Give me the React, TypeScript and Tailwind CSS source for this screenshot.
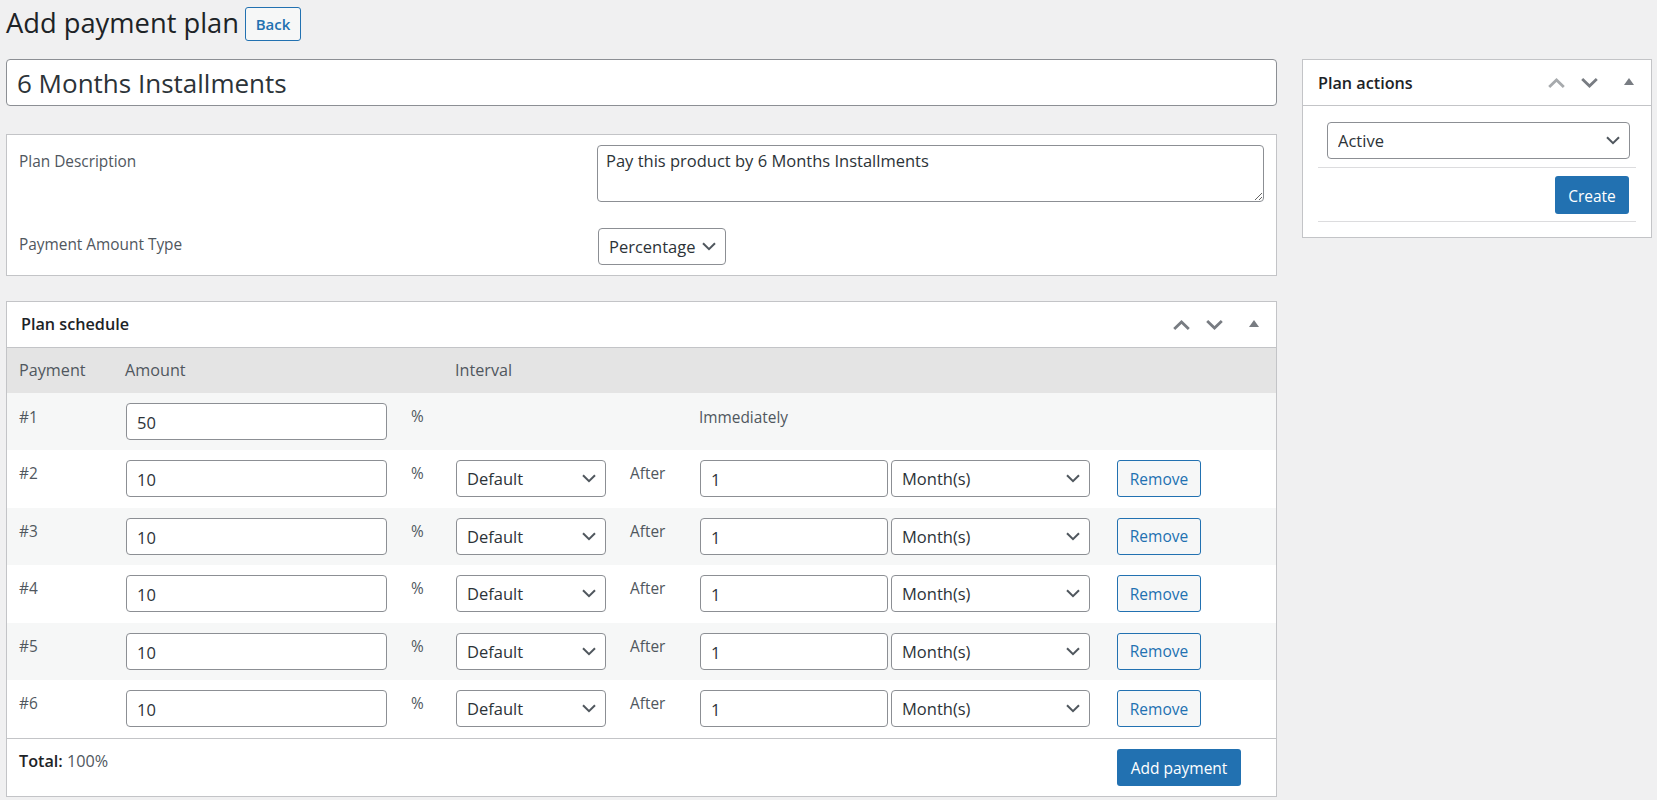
import { ReactNode } from 'react';

const FONT = "font-['Open_Sans',sans-serif]";
const PAYMENTS = [
  { n: 2, alt: false },
  { n: 3, alt: true },
  { n: 4, alt: false },
  { n: 5, alt: true },
  { n: 6, alt: false },
];

function Chevron({ up, className }: { up?: boolean; className?: string }) {
  return (
    <svg width="17" height="10" viewBox="0 0 17 10" fill="none" className={className}>
      <path d={up ? 'M1.2 9 L8.5 2 L15.8 9' : 'M1.2 1 L8.5 8 L15.8 1'} stroke="currentColor" strokeWidth="2.8" />
    </svg>
  );
}

function Triangle() {
  return (
    <svg width="10" height="7" viewBox="0 0 10 7" className="text-[#787c82]">
      <path d="M5 0 L10 7 L0 7 Z" fill="currentColor" />
    </svg>
  );
}

function PanelHandles({ fadedUp }: { fadedUp?: boolean }) {
  return (
    <div className="flex items-center">
      <Chevron up className={fadedUp ? 'text-[#a7aaad]' : 'text-[#787c82]'} />
      <Chevron className="ml-[16px] text-[#787c82]" />
      <div className="ml-[26px] mr-[17px] mb-[2px]"><Triangle /></div>
    </div>
  );
}

function Select({ value, className }: { value: string; className: string }) {
  return (
    <div className={`relative h-[37px] shrink-0 ${className}`}>
      <select
        defaultValue={value}
        className="h-full w-full appearance-none rounded-[4px] border border-[#8c8f94] bg-white pl-[10px] pr-[24px] pt-[2px] text-[16.5px] text-[#2c3338] outline-none"
      >
        <option>{value}</option>
      </select>
      <svg width="14" height="9" viewBox="0 0 14 9" fill="none" className="pointer-events-none absolute right-[10px] top-[14px]">
        <path d="M1 1.2 L7 7.2 L13 1.2" stroke="#50575e" strokeWidth="2" />
      </svg>
    </div>
  );
}

function TextInput({ value, className }: { value: string; className: string }) {
  return (
    <input
      defaultValue={value}
      className={`h-[37px] shrink-0 rounded-[4px] border border-[#8c8f94] bg-white px-[10px] pt-[2px] text-[16.5px] text-[#2c3338] outline-none ${className}`}
    />
  );
}

function Label({ children, className }: { children: ReactNode; className?: string }) {
  return <span className={`text-[15.4px] leading-[20px] text-[#50575e] ${className ?? ''}`}>{children}</span>;
}

export default function App() {
  return (
    <div className={`${FONT} flex min-h-[800px] items-start gap-[25px] bg-[#f0f0f1] pl-[6px]`}>
      <div className="w-[1271px] shrink-0">
        <div className="flex h-[59px] items-start pt-[7px]">
          <h1 className="text-[27.3px] leading-[32px] text-[#1d2327]">Add payment plan</h1>
          <button className="ml-[6px] h-[34px] w-[56px] rounded-[3px] border border-[#2271b1] bg-[#f6f7f7] text-[15px] font-semibold text-[#2271b1]">
            Back
          </button>
        </div>

        <input
          defaultValue="6 Months Installments"
          className="block h-[47px] w-full rounded-[4px] border border-[#8c8f94] bg-white px-[10px] text-[26px] text-[#2c3338] outline-none"
        />

        <div className="mt-[28px] h-[142px] border border-[#c3c4c7] bg-white">
          <div className="flex h-[85px] pl-[12px] pt-[17px]">
            <Label className="w-[578px]">Plan Description</Label>
            <textarea
              defaultValue="Pay this product by 6 Months Installments"
              className="-mt-[7px] h-[57px] w-[667px] rounded-[4px] border border-[#8c8f94] bg-white px-[8px] py-[5px] text-[16.5px] leading-[20px] text-[#2c3338] outline-none"
            />
          </div>
          <div className="flex items-center pl-[12px] pt-[8px]">
            <Label className="w-[579px] -mt-[4px]">Payment Amount Type</Label>
            <Select value="Percentage" className="w-[128px]" />
          </div>
        </div>

        <div className="mt-[25px] h-[496px] border border-[#c3c4c7] bg-white">
          <div className="flex h-[46px] items-center justify-between border-b border-[#c3c4c7] pl-[14px]">
            <h2 className="text-[16.2px] font-semibold text-[#1d2327]">Plan schedule</h2>
            <PanelHandles />
          </div>

          <div className="flex h-[45px] items-center bg-[#e4e4e4] text-[16.2px] text-[#50575e]">
            <span className="w-[118px] pl-[12px]">Payment</span>
            <span className="w-[330px]">Amount</span>
            <span>Interval</span>
          </div>

          <div className="flex h-[57px] items-start bg-[#f6f7f7] pt-[10px]">
            <Label className="mt-[5px] w-[119px] pl-[12px]">#1</Label>
            <TextInput value="50" className="w-[261px]" />
            <Label className="mt-[4px] ml-[24px] w-[288px]">%</Label>
            <Label className="mt-[5px]">Immediately</Label>
          </div>

          {PAYMENTS.map(p => (
            <div key={p.n} className={`flex h-[57.5px] items-start pt-[10px] ${p.alt ? 'bg-[#f6f7f7]' : 'bg-white'}`}>
              <Label className="mt-[4px] w-[119px] pl-[12px]">#{p.n}</Label>
              <TextInput value="10" className="w-[261px]" />
              <Label className="mt-[4px] ml-[24px] w-[45px]">%</Label>
              <Select value="Default" className="w-[150px]" />
              <Label className="mt-[4px] w-[94px] pl-[24px]">After</Label>
              <TextInput value="1" className="w-[188px]" />
              <Select value="Month(s)" className="ml-[3px] w-[199px]" />
              <button className="ml-[27px] h-[37px] w-[84px] rounded-[3px] border border-[#2271b1] bg-[#f6f7f7] pt-[2px] text-[15.5px] text-[#2271b1]">
                Remove
              </button>
            </div>
          ))}

          <div className="flex items-start justify-between border-t border-[#c3c4c7] pl-[12px] pr-[35px] pt-[10px]">
            <span className="text-[16.2px] leading-[24px] text-[#50575e]">
              <strong className="font-semibold text-[#1d2327]">Total:</strong> 100%
            </span>
            <button className="h-[37px] w-[124px] rounded-[3px] bg-[#2271b1] pt-[3px] text-[15.5px] text-white">Add payment</button>
          </div>
        </div>
      </div>

      <div className="mt-[59px] h-[179px] w-[350px] shrink-0 border border-[#c3c4c7] bg-white">
        <div className="flex h-[46px] items-center justify-between border-b border-[#c3c4c7] pl-[15px]">
          <h2 className="pt-[1px] text-[16.2px] font-semibold text-[#1d2327]">Plan actions</h2>
          <PanelHandles fadedUp />
        </div>
        <div className="mx-[15px] pt-[16px]">
          <div className="pb-[8px] pl-[9px] pr-[6px]">
            <Select value="Active" className="w-[303px]" />
          </div>
          <div className="flex justify-end border-y border-[#dcdcde] pb-[7px] pr-[7px] pt-[8px]">
            <button className="h-[38px] w-[74px] rounded-[3px] bg-[#2271b1] pt-[3px] text-[15.5px] text-white">Create</button>
          </div>
        </div>
      </div>
    </div>
  );
}
